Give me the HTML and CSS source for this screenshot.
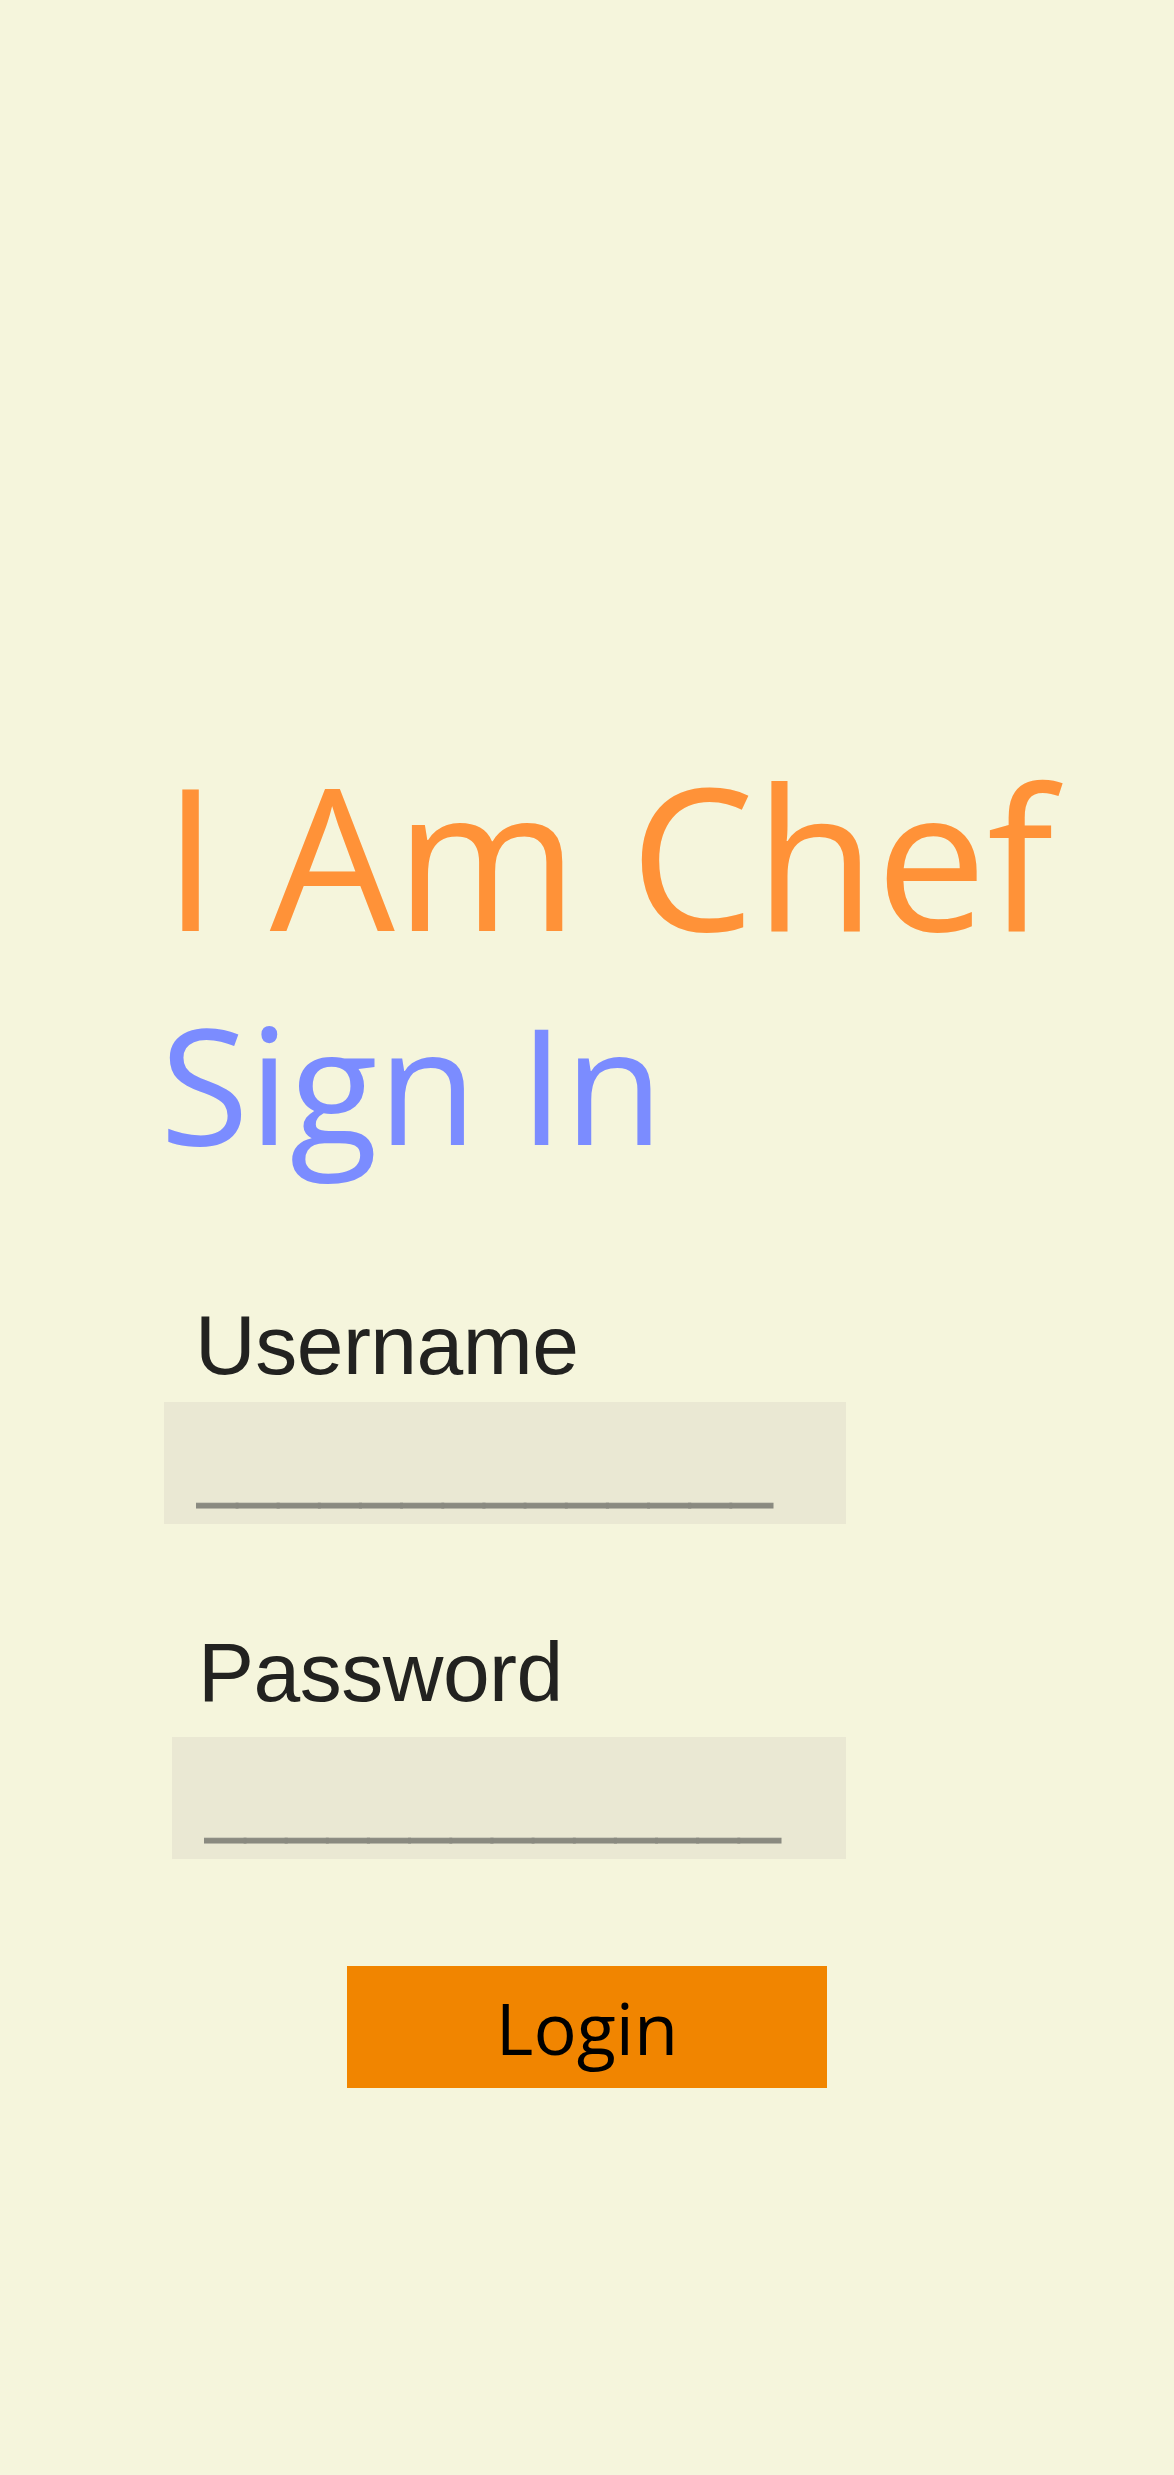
FILE: index.html
```html
<!DOCTYPE html>
<html lang="en">
<head>
<meta charset="utf-8">
<title>I Am Chef - Sign In</title>
<link rel="stylesheet" href="styles.css">
</head>
<body>
<main class="page">
  <h1 class="brand">I Am Chef</h1>
  <h2 class="title">Sign In</h2>
  <form class="form">
    <label class="field-label field-label--user" for="user">Username</label>
    <input id="user" class="field field--user" type="text" placeholder="______________">
    <label class="field-label field-label--pass" for="pass">Password</label>
    <input id="pass" class="field field--pass" type="password" placeholder="______________">
    <button class="login" type="button">Login</button>
  </form>
</main>
</body>
</html>
```
FILE: styles.css
```css
html, body {
  margin: 0;
  background: #F5F5DC;
}
body {
  min-height: 2475px;
}
.page {
  padding: 755px 0 0 164px;
  display: flex;
  flex-direction: column;
  align-items: flex-start;
}
.brand {
  margin: 0 0 0 -1px;
  font: 400 198px/198px "Open Sans", sans-serif;
  color: #FF9238;
  white-space: nowrap;
}
.title {
  margin: 48px 0 0 -4px;
  font: 400 162px/162px "Open Sans", sans-serif;
  color: #7B8CFF;
  white-space: nowrap;
}
.form {
  display: flex;
  flex-direction: column;
  align-items: flex-start;
  margin: 0;
}
.field-label {
  display: block;
  font: 400 84px/84px "Liberation Sans", Arial, sans-serif;
  letter-spacing: -0.5px;
  color: #222220;
}
.field-label--user {
  margin: 140px 0 0 31px;
}
.field-label--pass {
  margin: 106px 0 0 34px;
}
.field {
  box-sizing: border-box;
  height: 122px;
  border: 0;
  outline: none;
  background: #EAE8D3;
  padding: 9px 0 0 32px;
  font: 400 74px "Liberation Sans", Arial, sans-serif;
  color: #222220;
}
.field::placeholder {
  color: #8A8A80;
  opacity: 1;
  -webkit-text-stroke: 1px #8A8A80;
}
.field--user {
  width: 682px;
  margin-top: 15px;
}
.field--pass {
  width: 674px;
  margin: 23px 0 0 8px;
}
.login {
  margin: 107px 0 0 183px;
  width: 480px;
  height: 122px;
  padding: 0;
  border: 0;
  background: #F18500;
  font: 400 72px "Open Sans", sans-serif;
  color: #000;
}
```
